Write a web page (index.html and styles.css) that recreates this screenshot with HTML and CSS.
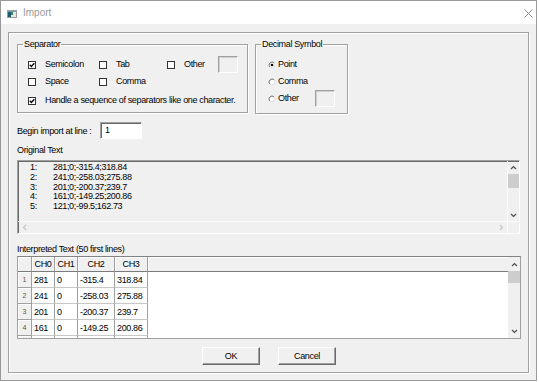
FILE: index.html
```
<!doctype html>
<html>
    <head>
        <meta charset='utf-8'>
        <title>Import</title>
        <link rel="stylesheet" href="styles.css">
    </head>
    <body>
        <div class='window'>
            <div class='titlebar'>
                <svg class='app-icon' width='10' height='8' viewBox='0 0 10 8'>
                    <rect x='0.5' y='0.5' width='9' height='7' fill='#e6e6e6' stroke='#9a9a9a'/>
                    <rect x='1' y='2' width='3' height='5' fill='#1d5e6e'/>
                    <rect x='4' y='2' width='2' height='3' fill='#3c8a5a'/>
                    <rect x='1' y='1' width='8' height='1' fill='#7aa0c0'/>
                </svg>
                <span class='title'>Import</span>
                <svg class='close' width='9' height='9' viewBox='0 0 9 9'>
                    <path d='M0.5 0.5 L8.5 8.5 M8.5 0.5 L0.5 8.5' stroke='#8c8c8c' stroke-width='1'/>
                </svg>
            </div>
            <div class='client'>
                <div class='panel'>
                    <div class='top-row'>
                        <fieldset class='group sep-group'>
                            <legend>Separator</legend>
                            <div class='opt-row'>
                                <span class='opt col-a'><span class='check'><svg width='6' height='6' viewBox='0 0 6 6'><path d='M0.8 2.8 L2.4 4.4 L5.3 1.2' fill='none' stroke='#000' stroke-width='1.4'/></svg></span>Semicolon</span>
                                <span class='opt col-b'><span class='check'></span>Tab</span>
                                <span class='opt'><span class='check'></span>Other</span>
                                <span class='field small sep-other'></span>
                            </div>
                            <div class='opt-row row-2'>
                                <span class='opt col-a'><span class='check'></span>Space</span>
                                <span class='opt col-b'><span class='check'></span>Comma</span>
                            </div>
                            <div class='opt-row row-3'>
                                <span class='opt'><span class='check'><svg width='6' height='6' viewBox='0 0 6 6'><path d='M0.8 2.8 L2.4 4.4 L5.3 1.2' fill='none' stroke='#000' stroke-width='1.4'/></svg></span>Handle a sequence of separators like one character.</span>
                            </div>
                        </fieldset>
                        <fieldset class='group dec-group'>
                            <legend>Decimal Symbol</legend>
                            <div class='opt-row'>
                                <span class='opt'><svg class='radio' width='8' height='8' viewBox='0 0 8 8'><circle cx='4' cy='4' r='3' fill='#fff'/><path d='M1.88 6.12 A3 3 0 0 1 6.12 1.88' fill='none' stroke='#6e6e6e'/><path d='M6.12 1.88 A3 3 0 0 1 1.88 6.12' fill='none' stroke='#dcdcdc'/><circle cx='4' cy='4' r='1.3' fill='#000'/></svg>Point</span>
                            </div>
                            <div class='opt-row dec-row'>
                                <span class='opt'><svg class='radio' width='8' height='8' viewBox='0 0 8 8'><circle cx='4' cy='4' r='3' fill='#fff'/><path d='M1.88 6.12 A3 3 0 0 1 6.12 1.88' fill='none' stroke='#6e6e6e'/><path d='M6.12 1.88 A3 3 0 0 1 1.88 6.12' fill='none' stroke='#dcdcdc'/></svg>Comma</span>
                            </div>
                            <div class='opt-row dec-row'>
                                <span class='opt dec-other'><svg class='radio' width='8' height='8' viewBox='0 0 8 8'><circle cx='4' cy='4' r='3' fill='#fff'/><path d='M1.88 6.12 A3 3 0 0 1 6.12 1.88' fill='none' stroke='#6e6e6e'/><path d='M6.12 1.88 A3 3 0 0 1 1.88 6.12' fill='none' stroke='#dcdcdc'/></svg>Other</span>
                                <span class='field small'></span>
                            </div>
                        </fieldset>
                    </div>

                    <div class='line-row'>
                        <span class='line-label'>Begin import at line :</span>
                        <span class='field num'>1</span>
                    </div>

                    <div class='caption'>Original Text</div>
                    <div class='textview'>
                        <div class='lines'>
                            <div class='ln'><span class='ln-no'>1:</span>281;0;-315.4;318.84</div>
                            <div class='ln'><span class='ln-no'>2:</span>241;0;-258.03;275.88</div>
                            <div class='ln'><span class='ln-no'>3:</span>201;0;-200.37;239.7</div>
                            <div class='ln'><span class='ln-no'>4:</span>161;0;-149.25;200.86</div>
                            <div class='ln'><span class='ln-no'>5:</span>121;0;-99.5;162.73</div>
                        </div>
                        <div class='vscroll'>
                            <span class='arrow'><svg width='7' height='5' viewBox='0 0 7 5'><path d='M1 4 L3.5 1.5 L6 4' fill='none' stroke='#505050' stroke-width='1.2'/></svg></span>
                            <span class='thumb'></span>
                            <span class='spacer'></span>
                            <span class='arrow'><svg width='7' height='5' viewBox='0 0 7 5'><path d='M1 1 L3.5 3.5 L6 1' fill='none' stroke='#505050' stroke-width='1.2'/></svg></span>
                        </div>
                        <div class='hscroll'>
                            <span class='arrow'><svg width='5' height='7' viewBox='0 0 5 7'><path d='M4 1 L1.5 3.5 L4 6' fill='none' stroke='#c4c4c4' stroke-width='1.1'/></svg></span>
                            <span class='arrow'><svg width='5' height='7' viewBox='0 0 5 7'><path d='M1 1 L3.5 3.5 L1 6' fill='none' stroke='#c4c4c4' stroke-width='1.1'/></svg></span>
                        </div>
                        <div class='corner'></div>
                    </div>

                    <div class='caption caption-grid'>Interpreted Text (50 first lines)</div>
                    <div class='datagrid'>
                        <div class='table-wrap'>
                            <table class='cells'>
                                <colgroup>
                                    <col class='c-rh'><col class='c-0'><col class='c-1'><col class='c-2'><col class='c-3'><col>
                                </colgroup>
                                <tr class='head'><th></th><th>CH0</th><th>CH1</th><th>CH2</th><th>CH3</th><th class='rest'></th></tr>
                                <tr><td class='rh'>1</td><td>281</td><td>0</td><td>-315.4</td><td>318.84</td><td class='rest'></td></tr>
                                <tr><td class='rh'>2</td><td>241</td><td>0</td><td>-258.03</td><td>275.88</td><td class='rest'></td></tr>
                                <tr><td class='rh'>3</td><td>201</td><td>0</td><td>-200.37</td><td>239.7</td><td class='rest'></td></tr>
                                <tr><td class='rh'>4</td><td>161</td><td>0</td><td>-149.25</td><td>200.86</td><td class='rest'></td></tr>
                                <tr><td class='rh'>5</td><td>121</td><td>0</td><td>-99.5</td><td>162.73</td><td class='rest'></td></tr>
                            </table>
                        </div>
                        <div class='vscroll grid-scroll'>
                            <span class='arrow'><svg width='7' height='5' viewBox='0 0 7 5'><path d='M1 4 L3.5 1.5 L6 4' fill='none' stroke='#505050' stroke-width='1.2'/></svg></span>
                            <span class='thumb'></span>
                            <span class='spacer'></span>
                            <span class='arrow'><svg width='7' height='5' viewBox='0 0 7 5'><path d='M1 1 L3.5 3.5 L6 1' fill='none' stroke='#505050' stroke-width='1.2'/></svg></span>
                        </div>
                    </div>

                    <div class='buttons'>
                        <button class='btn'>OK</button>
                        <button class='btn'>Cancel</button>
                    </div>
                </div>
            </div>
        </div>
    </body>
</html>
```
FILE: styles.css
```
html,body {
    margin:0px;
    padding:0px;
}
body {
    width:539px;
    height:382px;
    background:#fff;
    font-size:9px;
    letter-spacing:-0.35px;
    font-family:'Liberation Sans',Arial,sans-serif;
    color:#000;
    overflow:hidden;
}
.window {
    width:537px;
    height:381px;
    box-sizing:border-box;
    border:1px solid #9a9a9a;
    background:#f0f0f0;
}
.titlebar {
    height:23px;
    background:#fff;
    display:flex;
    align-items:center;
}
.app-icon {
    margin-left:6px;
    margin-top:3px;
}
.title {
    margin-left:6px;
    color:#9a9a9a;
    font-size:10px;
    letter-spacing:0;
}
.close {
    margin-left:auto;
    margin-right:3px;
    margin-top:1px;
}
.client {
    padding:8px 7px 0 7px;
}
.panel {
    width:521px;
    height:341px;
    box-sizing:border-box;
    border:1px solid #a0a0a0;
    box-shadow:inset 1px 1px 0 #fff,1px 1px 0 #fff;
    padding:5px 7px 0 8px;
}

/* group boxes */
.top-row {
    display:flex;
    align-items:flex-start;
    gap:7px;
}
.group {
    margin:0;
    min-width:0;
    border:1px solid #a0a0a0;
    box-shadow:inset 1px 1px 0 #fff,1px 1px 0 #fff;
    padding:8px 0 5px 5px;
    box-sizing:border-box;
}
.group legend {
    padding:0 1px;
    line-height:12px;
}
.sep-group {
    width:231px;
}
.dec-group {
    width:93px;
    padding-bottom:8px;
}
.opt-row {
    display:flex;
    align-items:center;
    height:13px;
    line-height:13px;
    padding-left:5px;
    white-space:nowrap;
}
.row-2 {
    margin-top:4px;
}
.row-3 {
    margin-top:6px;
}
.dec-group .opt-row {
    padding-left:7px;
}
.dec-row {
    margin-top:4px;
}
.opt {
    display:flex;
    align-items:center;
}
.col-a {
    width:71px;
}
.col-b {
    width:68px;
}
.check {
    width:8px;
    height:8px;
    box-sizing:border-box;
    border:1px solid #333;
    background:#fff;
    margin-right:9px;
    display:flex;
    align-items:center;
    justify-content:center;
}
.check svg {
    display:block;
}
.radio {
    margin-right:2px;
    display:block;
}
.dec-other {
    width:47px;
}
.field {
    display:block;
    box-sizing:border-box;
    border:1px solid;
    border-color:#a0a0a0 #fff #fff #a0a0a0;
}
.small {
    width:20px;
    height:17px;
    margin:-2px 0;
    background:#f0f0f0;
    box-shadow:inset 1px 1px 0 #d0d0d0;
}
.sep-other {
    margin-left:13px;
}

/* begin line */
.line-row {
    display:flex;
    align-items:center;
    margin-top:8px;
    height:17px;
    white-space:nowrap;
}
.line-label {
    width:83px;
}
.num {
    width:42px;
    height:17px;
    background:#fff;
    box-shadow:inset 1px 1px 0 #696969;
    padding-left:4px;
    line-height:15px;
}
.caption {
    line-height:12px;
    margin-top:5px;
}
.caption-grid {
    margin-top:9px;
}

/* original text */
.textview {
    margin-top:4px;
    width:503px;
    height:74px;
    box-sizing:border-box;
    border:1px solid;
    border-color:#a0a0a0 #fff #fff #a0a0a0;
    box-shadow:inset 1px 1px 0 #696969;
    display:grid;
    grid-template-columns:1fr 12px;
    grid-template-rows:1fr 12px;
}
.lines {
    padding:2px 0 0 12px;
    line-height:9.8px;
    white-space:nowrap;
    overflow:hidden;
}
.ln-no {
    display:inline-block;
    width:23px;
}
.vscroll {
    display:flex;
    flex-direction:column;
    border-left:1px solid #fbfbfb;
}
.vscroll .arrow {
    height:12px;
    display:flex;
    align-items:center;
    justify-content:center;
}
.thumb {
    height:14px;
    margin-top:1px;
    background:#cdcdcd;
}
.spacer {
    flex:1;
}
.hscroll {
    display:flex;
    justify-content:space-between;
    border-top:1px solid #fbfbfb;
}
.hscroll .arrow {
    width:12px;
    display:flex;
    align-items:center;
    justify-content:center;
}
.corner {
    border-top:1px solid #fbfbfb;
    border-left:1px solid #fbfbfb;
}

/* interpreted grid */
.datagrid {
    margin-top:1px;
    width:504px;
    height:83px;
    box-sizing:border-box;
    border:1px solid #a0a0a0;
    border-top-color:#828282;
    display:flex;
    background:#fff;
}
.table-wrap {
    flex:1;
    overflow:hidden;
}
.cells {
    width:100%;
    table-layout:fixed;
    border-collapse:separate;
    border-spacing:0;
}
.c-rh { width:14px; }
.c-0 { width:23px; }
.c-1 { width:23px; }
.c-2 { width:37px; }
.c-3 { width:33px; }
.cells th,.cells td {
    padding:0 0 0 2px;
    font-weight:normal;
    white-space:nowrap;
    overflow:hidden;
    box-sizing:border-box;
}
.head th {
    height:15px;
    background:#f0f0f0;
    text-align:center;
    padding:0;
    border-right:1px solid #a0a0a0;
    border-bottom:1px solid #7a7a7a;
    box-shadow:inset 1px 1px 0 #fff;
}
.head th.rest {
    border-right:none;
}
.cells td {
    height:16px;
    border-right:1px solid #a0a0a0;
    border-bottom:1px solid #c8c8c8;
}
.cells td.rh {
    background:#f0f0f0;
    font-size:7px;
    letter-spacing:0;
    color:#555;
    text-align:center;
    padding:0;
    border-bottom:1px solid #a0a0a0;
    box-shadow:inset 1px 1px 0 #fff;
}
.cells td.rest {
    border:none;
}
.grid-scroll {
    width:12px;
    background:#f0f0f0;
    border-left:none;
}
.grid-scroll .arrow {
    height:14px;
}
.grid-scroll .thumb {
    margin-top:0;
    height:12px;
}

/* buttons */
.buttons {
    display:flex;
    justify-content:center;
    gap:18px;
    margin-top:8px;
}
.btn {
    width:58px;
    height:18px;
    padding:0;
    margin:0;
    font:inherit;
    letter-spacing:inherit;
    color:#000;
    background:#f0f0f0;
    border:1px solid;
    border-color:#fff #696969 #696969 #fff;
    box-shadow:inset -1px -1px 0 #a0a0a0;
}
```
